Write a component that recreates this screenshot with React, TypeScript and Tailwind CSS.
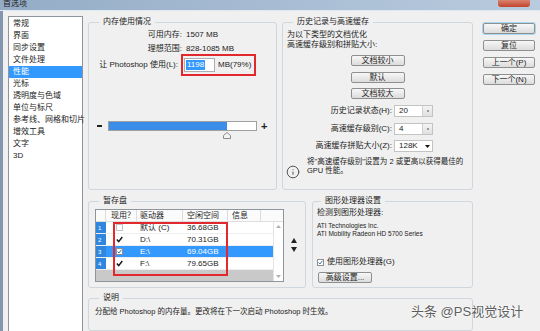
import type { ReactNode } from 'react'
import { Info } from 'lucide-react'

const categories = [
  '常规',
  '界面',
  '同步设置',
  '文件处理',
  '性能',
  '光标',
  '透明度与色域',
  '单位与标尺',
  '参考线、网格和切片',
  '增效工具',
  '文字',
  '3D',
]

const disks = [
  { n: 1, on: false, drive: '默认 (C)', free: '36.68GB', selected: false },
  { n: 2, on: true, drive: 'D:\\', free: '70.31GB', selected: false },
  { n: 3, on: true, drive: 'E:\\', free: '69.04GB', selected: true },
  { n: 4, on: true, drive: 'F:\\', free: '79.65GB', selected: false },
]

function Btn({ children, className = '' }: { children: ReactNode; className?: string }) {
  return (
    <div
      className={`flex items-center justify-center h-[11px] border border-[#8e8f8f] rounded-[2px] bg-linear-to-b from-[#f7f7f7] to-[#dcdcdc] text-[8px] leading-none text-[#1e1e1e] ${className}`}
    >
      {children}
    </div>
  )
}

function Group({
  title,
  className = '',
  legendClass = '',
  children,
}: {
  title: string
  className?: string
  legendClass?: string
  children?: ReactNode
}) {
  return (
    <fieldset className={`border border-[#cfd6dd] rounded-[3px] min-w-0 ${className}`}>
      <legend className={`px-[4px] text-[8px] leading-[12px] text-[#222] ${legendClass}`}>{title}</legend>
      {children}
    </fieldset>
  )
}

function Check({ on, light = false }: { on: boolean; light?: boolean }) {
  return (
    <div
      className={`w-[7px] h-[7px] flex items-center justify-center ${
        light ? 'border border-[#8f8f8f] bg-white' : on ? 'bg-transparent' : 'border border-[#c4c4c4] bg-white'
      }`}
    >
      {on && (
        <svg width="7" height="7" viewBox="0 0 7 7">
          <path d="M0.8 3.6 L2.7 5.6 L6.3 1" fill="none" stroke={light ? '#3a6ea5' : '#111'} strokeWidth="1.4" />
        </svg>
      )}
    </div>
  )
}

function Select({ label, value, arrow = false }: { label: string; value: string; arrow?: boolean }) {
  return (
    <div className="flex items-center h-[12px]">
      <span className="w-[109px] text-right text-[8px] leading-none">{label}</span>
      <div className="ml-[2px] w-[39px] h-[12px] flex border border-[#c3c3c3] bg-white">
        <span className="flex-1 pl-[4px] text-[8px] leading-[10px]">{value}</span>
        {arrow ? (
          <div className="w-[10px] flex items-center justify-center">
            <svg width="5" height="3" viewBox="0 0 5 3">
              <path d="M0 0 H5 L2.5 3 Z" fill="#111" />
            </svg>
          </div>
        ) : (
          <div className="w-[10px] border-l border-[#d0d0d0] bg-linear-to-b from-[#f4f4f4] to-[#e0e0e0] flex items-center justify-center">
            <div className="w-[2px] h-[2px] bg-[#999]" />
          </div>
        )}
      </div>
    </div>
  )
}

export default function App() {
  return (
    <div className="relative w-[540px] h-[331px] overflow-hidden flex flex-col bg-[#f0f0f0] text-[#222] font-['Liberation_Sans','Noto_Sans_CJK_SC',sans-serif]">
      {/* title bar */}
      <div className="h-[11px] shrink-0 flex items-start bg-linear-to-r from-[#94acc6] via-[#a7bcd3] to-[#b9cbde] border-b border-[#dfe8f1]">
        <span className="ml-[3px] -mt-[1px] text-[8px] leading-[10px] text-[#1c1c1c]">首选项</span>
        <div className="ml-auto mr-[10px] w-[32px] h-[7px] rounded-b-[3px] bg-linear-to-b from-[#d9826e] to-[#c2412a]" />
      </div>

      <div className="flex-1 flex min-h-0">
        <div className="w-[3px] bg-[#8296ae]" />
        <div className="flex-1 flex pt-[5px] pl-[5px]">
          {/* category list */}
          <div className="w-[75px] h-[330px] border border-[#8f959c] bg-white pt-[1px]">
            {categories.map((c, i) => (
              <div
                key={c}
                className={`h-[12px] pl-[4px] text-[8px] leading-[12px] whitespace-nowrap ${
                  i === 4 ? 'bg-[#3399ff] text-white' : 'text-[#222]'
                }`}
              >
                {c}
              </div>
            ))}
          </div>

          {/* main column */}
          <div className="ml-[5px] w-[385px] flex flex-col">
            <div className="flex gap-[5px] h-[174px]">
              <Group title="内存使用情况" className="w-[189px] h-[174px]" legendClass="ml-[10px]">
                <div className="grid grid-cols-[93px_auto] gap-x-[4px] text-[8px] leading-[14px]">
                  <span className="text-right">可用内存:</span>
                  <span>1507 MB</span>
                  <span className="text-right">理想范围:</span>
                  <span>828-1085 MB</span>
                </div>
                <div className="flex items-center -mt-[2px] text-[8px]">
                  <span className="w-[89px] text-right whitespace-nowrap">让 Photoshop 使用(L):</span>
                  <div className="ml-[3px] w-[75px] h-[22px] border-2 border-[#e2282c] flex items-center">
                    <div className="ml-[1px] w-[31px] h-[14px] border border-[#abadb3] bg-white flex items-center pl-[1px]">
                      <span className="bg-[#3399ff] text-white leading-[10px] px-[1px]">1198</span>
                    </div>
                    <span className="ml-[3px] whitespace-nowrap">MB(79%)</span>
                  </div>
                </div>
                <div className="flex items-center mt-[45px] h-[10px]">
                  <div className="ml-[8px] w-[5px] h-[2px] bg-[#222]" />
                  <div className="ml-[6px] w-[149px] h-[10px] border border-[#a0a0a0] bg-white">
                    <div className="w-[118px] h-full bg-[#3a8ee8]" />
                  </div>
                  <span className="ml-[4px] text-[11px] font-bold leading-none">+</span>
                </div>
                <div className="pl-[134px] mt-[1px]">
                  <svg width="8" height="7" viewBox="0 0 8 7">
                    <path d="M4 0.5 L7.5 3.5 V6.5 H0.5 V3.5 Z" fill="#f4f4f4" stroke="#8a8a8a" />
                  </svg>
                </div>
              </Group>

              <Group title="历史记录与高速缓存" className="w-[191px] h-[174px]" legendClass="ml-[10px]">
                <div className="pl-[4px] mt-[2px] text-[8px] leading-[10px]">
                  <div>为以下类型的文档优化</div>
                  <div>高速缓存级别和拼贴大小:</div>
                </div>
                <Btn className="mx-auto mt-[5px] w-[54px]">文档较小</Btn>
                <Btn className="mx-auto mt-[6px] w-[54px]">默认</Btn>
                <Btn className="mx-auto mt-[5px] w-[54px]">文档较大</Btn>
                <div className="mt-[6px]">
                  <Select label="历史记录状态(H):" value="20" />
                </div>
                <div className="mt-[6px]">
                  <Select label="高速缓存级别(C):" value="4" />
                </div>
                <div className="mt-[5px]">
                  <Select label="高速缓存拼贴大小(Z):" value="128K" arrow />
                </div>
                <div className="flex items-start mt-[5px]">
                  <Info className="ml-[3px] mt-[8px] w-[14px] h-[14px] text-[#4a4a4a]" strokeWidth={1.6} />
                  <div className="ml-[7px] text-[7.5px] leading-[9px]">
                    <div>将"高速缓存级别"设置为 2 或更高以获得最佳的</div>
                    <div>GPU 性能。</div>
                  </div>
                </div>
              </Group>
            </div>

            <div className="flex gap-[6px] h-[93px] mt-[5px]">
              <Group title="暂存盘" className="w-[218px] h-[93px]" legendClass="ml-[10px]">
                <div className="flex mt-[2px] ml-[6px]">
                  <div className="relative w-[189px] h-[73px] border border-[#8f959c] bg-white flex flex-col text-[8px]">
                    <div className="flex h-[12px] leading-[12px] border-b border-[#dedede] bg-[#fbfbfb]">
                      <div className="w-[10px] border-r border-[#dcdcdc]" />
                      <div className="w-[31px] pl-[5px] border-r border-[#dcdcdc]">现用？</div>
                      <div className="w-[46px] pl-[3px] border-r border-[#dcdcdc]">驱动器</div>
                      <div className="w-[45px] pl-[4px] border-r border-[#dcdcdc]">空闲空间</div>
                      <div className="w-[33px] pl-[4px] border-r border-[#dcdcdc]">信息</div>
                    </div>
                    <div className="flex flex-1">
                      <div className="w-[177px] flex flex-col">
                        {disks.map((d) => (
                          <div
                            key={d.n}
                            className={`flex h-[12px] leading-[12px] border-b border-[#eeeeee] ${
                              d.selected ? 'bg-[#3399ff] text-white' : ''
                            }`}
                          >
                            <div className="w-[10px] bg-[#2f86df] text-white text-[6px] pl-[2px]">{d.n}</div>
                            <div className="w-[31px] pl-[10px] flex items-center">
                              <Check on={d.on} light={d.selected} />
                            </div>
                            <div className="w-[46px] pl-[3px] whitespace-nowrap">{d.drive}</div>
                            <div className="w-[45px] pl-[4px]">{d.free}</div>
                          </div>
                        ))}
                        <div className="flex-1 bg-[#c9c9c9]" />
                      </div>
                      <div className="w-[10px] border-l border-[#e4e4e4] flex flex-col items-center justify-between py-[3px]">
                        <svg width="5" height="3" viewBox="0 0 5 3">
                          <path d="M0 3 L2.5 0 L5 3 Z" fill="#b0b0b0" />
                        </svg>
                        <svg width="5" height="3" viewBox="0 0 5 3">
                          <path d="M0 0 H5 L2.5 3 Z" fill="#b0b0b0" />
                        </svg>
                      </div>
                    </div>
                    <div className="absolute left-[17px] top-[12px] w-[115px] h-[54px] border-2 border-[#e2282c]" />
                  </div>
                  <div className="ml-[7px] pt-[29px] flex flex-col items-center gap-[4px]">
                    <svg width="6" height="5" viewBox="0 0 6 5">
                      <path d="M0 5 L3 0 L6 5 Z" fill="#222" />
                    </svg>
                    <svg width="6" height="5" viewBox="0 0 6 5">
                      <path d="M0 0 H6 L3 5 Z" fill="#222" />
                    </svg>
                  </div>
                </div>
              </Group>

              <Group title="图形处理器设置" className="w-[161px] h-[93px]" legendClass="ml-[8px]">
                <div className="pl-[4px]">
                  <div className="text-[8px] leading-[12px]">检测到图形处理器:</div>
                  <div className="mt-[3px] text-[6.5px] leading-[8px]">
                    <div>ATI Technologies Inc.</div>
                    <div>ATI Mobility Radeon HD 5700 Series</div>
                  </div>
                  <div className="mt-[18px] h-[12px] flex items-center text-[8px]">
                    <Check on light />
                    <span className="ml-[3px]">使用图形处理器(G)</span>
                  </div>
                  <Btn className="mt-[4px] ml-[1px] w-[54px]">高级设置...</Btn>
                </div>
              </Group>
            </div>

            <Group title="说明" className="mt-[4px] h-[60px]" legendClass="ml-[10px]">
              <div className="pl-[6px] mt-[2px] text-[7.5px] leading-[12px] whitespace-nowrap">
                分配给 Photoshop 的内存量。更改将在下一次启动 Photoshop 时生效。
              </div>
            </Group>
          </div>

          {/* dialog buttons */}
          <div className="ml-[10px] w-[52px] flex flex-col gap-[6px] pt-[7px]">
            <Btn className="border-[#3c7fb1] shadow-[0_0_0_1px_#a9d8f5]">确定</Btn>
            <Btn>复位</Btn>
            <Btn>上一个(P)</Btn>
            <Btn>下一个(N)</Btn>
          </div>
        </div>
      </div>

      <div className="absolute left-[411px] top-[304px] text-[13px] leading-[16px] text-[#5e5e5e] [text-shadow:0_0_2px_#fff,0_0_2px_#fff]">
        头条 @PS视觉设计
      </div>
    </div>
  )
}
